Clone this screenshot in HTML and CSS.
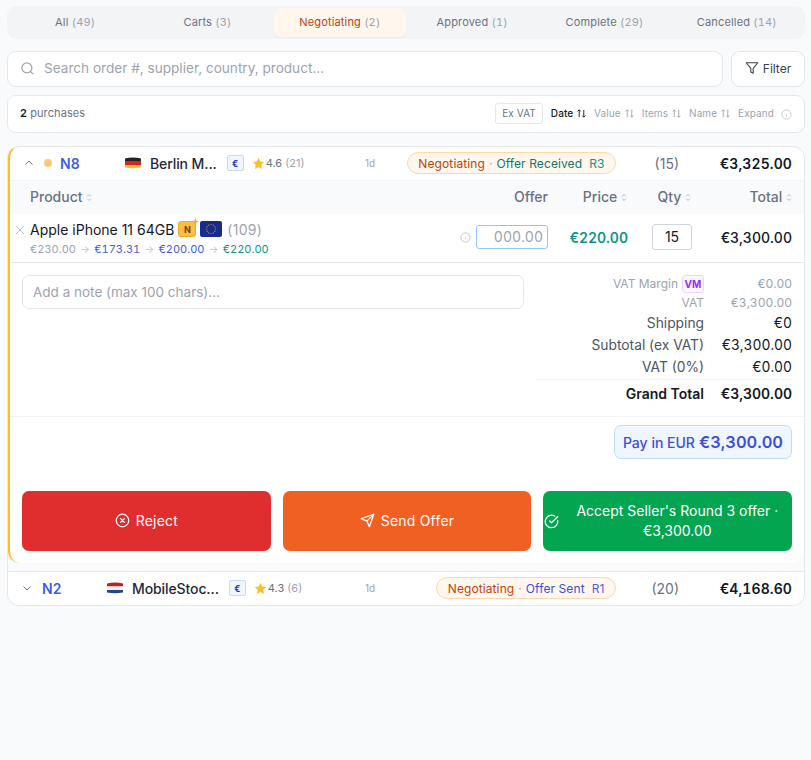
FILE: index.html
```html
<!DOCTYPE html>
<html lang="en">
<head>
    <meta charset="UTF-8">
    <title>Purchases</title>
    <link rel="stylesheet" href="styles.css">
</head>
<body>
    <nav class="tabs">
        <a class="tab">All <span>(49)</span></a>
        <a class="tab">Carts <span>(3)</span></a>
        <a class="tab tab-active">Negotiating <span>(2)</span></a>
        <a class="tab">Approved <span>(1)</span></a>
        <a class="tab">Complete <span>(29)</span></a>
        <a class="tab">Cancelled <span>(14)</span></a>
    </nav>

    <div class="search-row">
        <div class="search">
            <svg class="search-icon" viewBox="0 0 24 24"><circle cx="11" cy="11" r="8"/><path d="M21 21l-4.3-4.3"/></svg>
            <span>Search order #, supplier, country, product...</span>
        </div>
        <button class="filter-btn">
            <svg viewBox="0 0 24 24"><path d="M22 3H2l8 9.5V19l4 2v-8.500z"/></svg>
            Filter
        </button>
    </div>

    <div class="summary">
        <div class="count"><b>2</b> purchases</div>
        <div class="sorts">
            <span class="vat-toggle">Ex VAT</span>
            <span class="sort sort-active">Date <svg viewBox="0 0 12 12"><path d="M3.500 10V2M1.800 3.700L3.500 2l1.700 1.700M8.500 2v8M6.800 8.300L8.500 10l1.700-1.700"/></svg></span>
            <span class="sort">Value <svg viewBox="0 0 12 12"><path d="M3.500 10V2M1.800 3.700L3.500 2l1.700 1.700M8.500 2v8M6.800 8.300L8.500 10l1.700-1.700"/></svg></span>
            <span class="sort">Items <svg viewBox="0 0 12 12"><path d="M3.500 10V2M1.800 3.700L3.500 2l1.700 1.700M8.500 2v8M6.800 8.300L8.500 10l1.700-1.700"/></svg></span>
            <span class="sort">Name <svg viewBox="0 0 12 12"><path d="M3.500 10V2M1.800 3.700L3.500 2l1.700 1.700M8.500 2v8M6.800 8.300L8.500 10l1.700-1.700"/></svg></span>
            <span class="sort">Expand</span>
            <svg class="info-icon" viewBox="0 0 24 24"><circle cx="12" cy="12" r="10"/><path d="M12 16v-4.500M12 8h.01"/></svg>
        </div>
    </div>

    <div class="orders">
        <section class="order-open">
            <div class="order-head">
                <div class="order-left">
                    <svg class="chevron" viewBox="0 0 24 24"><path d="M5 15l7-7 7 7"/></svg>
                    <span class="dot"></span>
                    <span class="order-id">N8</span>
                    <svg class="flag" viewBox="0 0 16 12"><path fill="#222" d="M0 1.500q8-2 16 0v3.300H0z"/><path fill="#d8232a" d="M0 4.500h16v3.500H0z"/><path fill="#f5c518" d="M0 8h16v2.500q-8 1.500-16 0z"/></svg>
                    <span class="supplier">Berlin M...</span>
                    <span class="euro-badge">€</span>
                    <svg class="star" viewBox="0 0 24 24"><path d="M12 1.500l3.200 6.800 7.300 1-5.300 5.200 1.300 7.500-6.500-3.600-6.500 3.600 1.300-7.500L1.500 9.300l7.300-1z"/></svg>
                    <span class="rating">4.6 <span>(21)</span></span>
                </div>
                <span class="age">1d</span>
                <div class="status-wrap">
                    <span class="status"><span class="st-neg">Negotiating</span> <i>·</i> <span class="st-green">Offer Received</span> <span class="st-round-green">R3</span></span>
                </div>
                <span class="items-count">(15)</span>
                <span class="order-total">€3,325.00</span>
            </div>

            <div class="table-head">
                <span class="th-product">Product <svg class="updown" viewBox="0 0 8 12"><path d="M1.500 4.500L4 2l2.500 2.500M1.500 7.500L4 10l2.500-2.500"/></svg></span>
                <span class="th-offer">Offer</span>
                <span class="th-price">Price <svg class="updown" viewBox="0 0 8 12"><path d="M1.500 4.500L4 2l2.500 2.500M1.500 7.500L4 10l2.500-2.500"/></svg></span>
                <span class="th-qty">Qty <svg class="updown" viewBox="0 0 8 12"><path d="M1.500 4.500L4 2l2.500 2.500M1.500 7.500L4 10l2.500-2.500"/></svg></span>
                <span class="th-total">Total <svg class="updown" viewBox="0 0 8 12"><path d="M1.500 4.500L4 2l2.500 2.500M1.500 7.500L4 10l2.500-2.500"/></svg></span>
            </div>

            <div class="item-row">
                <svg class="remove" viewBox="0 0 10 10"><path d="M1 1l8 8M9 1l-8 8"/></svg>
                <div class="item-main">
                    <div class="item-name">
                        <span>Apple iPhone 11 64GB</span>
                        <span class="n-badge">N<svg class="spark" viewBox="0 0 8 8"><path d="M4 0l1 3 3 1-3 1-1 3-1-3-3-1 3-1z"/></svg></span>
                        <svg class="eu-flag" viewBox="0 0 22 16">
                            <rect width="22" height="16" rx="2" fill="#1a2a8c"/>
                            <g fill="#c9a92e"><circle cx="11" cy="3.500" r=".6"/><circle cx="13.300" cy="4.100" r=".6"/><circle cx="14.900" cy="5.800" r=".6"/><circle cx="15.500" cy="8" r=".6"/><circle cx="14.900" cy="10.200" r=".6"/><circle cx="13.300" cy="11.900" r=".6"/><circle cx="11" cy="12.500" r=".6"/><circle cx="8.700" cy="11.900" r=".6"/><circle cx="7.100" cy="10.200" r=".6"/><circle cx="6.500" cy="8" r=".6"/><circle cx="7.100" cy="5.800" r=".6"/><circle cx="8.700" cy="4.100" r=".6"/></g>
                        </svg>
                        <span class="stock">(109)</span>
                    </div>
                    <div class="price-trail">
                        <span class="pt-grey">€230.00</span><span class="arrow">→</span><span class="pt-blue">€173.31</span><span class="arrow">→</span><span class="pt-blue">€200.00</span><span class="arrow">→</span><span class="pt-green">€220.00</span>
                    </div>
                </div>
                <svg class="info-icon offer-info" viewBox="0 0 24 24"><circle cx="12" cy="12" r="10"/><path d="M12 16v-4.500M12 8h.01"/></svg>
                <div class="offer-input">000.00</div>
                <div class="item-price">€220.00</div>
                <div class="qty-cell"><span class="qty-input">15</span></div>
                <div class="item-total">€3,300.00</div>
            </div>

            <div class="note-row">
                <div class="note-input">Add a note (max 100 chars)...</div>
                <div class="totals">
                    <div class="t-row t-small"><span class="t-label">VAT Margin <b class="vm">VM</b></span><span class="t-val">€0.00</span></div>
                    <div class="t-row t-small"><span class="t-label">VAT</span><span class="t-val">€3,300.00</span></div>
                    <div class="t-row t-normal"><span class="t-label">Shipping</span><span class="t-val">€0</span></div>
                    <div class="t-row t-normal"><span class="t-label">Subtotal (ex VAT)</span><span class="t-val">€3,300.00</span></div>
                    <div class="t-row t-normal"><span class="t-label">VAT (0%)</span><span class="t-val">€0.00</span></div>
                    <div class="t-row t-grand"><span class="t-label">Grand Total</span><span class="t-val">€3,300.00</span></div>
                </div>
            </div>

            <div class="pay-row">
                <div class="pay-chip">Pay in EUR <b>€3,300.00</b></div>
            </div>

            <div class="actions">
                <button class="action action-red">
                    <svg viewBox="0 0 24 24"><circle cx="12" cy="12" r="10"/><path d="M15 9l-6 6M9 9l6 6"/></svg>
                    Reject
                </button>
                <button class="action action-orange">
                    <svg viewBox="0 0 24 24"><path d="M22 2L11 13M22 2l-7 20-4-9-9-4z"/></svg>
                    Send Offer
                </button>
                <button class="action action-green">
                    <svg viewBox="0 0 24 24"><path d="M21.800 10A10 10 0 1 1 17 3.300"/><path d="M9 11l3 3L22 4"/></svg>
                    <span>Accept Seller's Round 3 offer · €3,300.00</span>
                </button>
            </div>
        </section>

        <section class="order-closed">
            <div class="order-head">
                <div class="order-left">
                    <svg class="chevron chevron-small" viewBox="0 0 24 24"><path d="M5 9l7 7 7-7"/></svg>
                    <span class="order-id">N2</span>
                    <svg class="flag" viewBox="0 0 16 12"><path fill="#b5242c" d="M0 1.500q8-2 16 0v3H0z"/><path fill="#f2f2f2" d="M0 4.500h16v3.500H0z"/><path fill="#27408f" d="M0 8h16v2.500q-8 1.500-16 0z"/></svg>
                    <span class="supplier">MobileStoc...</span>
                    <span class="euro-badge">€</span>
                    <svg class="star" viewBox="0 0 24 24"><path d="M12 1.500l3.200 6.800 7.300 1-5.300 5.200 1.300 7.500-6.500-3.600-6.500 3.600 1.300-7.500L1.500 9.300l7.300-1z"/></svg>
                    <span class="rating">4.3 <span>(6)</span></span>
                </div>
                <span class="age">1d</span>
                <div class="status-wrap">
                    <span class="status"><span class="st-neg">Negotiating</span> <i>·</i> <span class="st-blue">Offer Sent</span> <span class="st-round-blue">R1</span></span>
                </div>
                <span class="items-count">(20)</span>
                <span class="order-total">€4,168.60</span>
            </div>
        </section>
    </div>
</body>
</html>
```

FILE: styles.css
```css
* {
    box-sizing: border-box;
}

body {
    margin: 0;
    padding: 6px 6px 0 7px;
    font-family: Inter, "Liberation Sans", sans-serif;
    background-color: #f9fafb;
    color: #111827;
}

/* prices and counts line up in columns */
.tab span,
.price-trail,
.order-total,
.item-price,
.item-total,
.offer-input,
.t-val,
.pay-chip b {
    font-variant-numeric: tabular-nums;
}

/* tabs */
.tabs {
    display: grid;
    grid-template-columns: repeat(6, 1fr);
    height: 33px;
    padding: 2px;
    background: #f3f4f6;
    border-radius: 9px;
}

.tab {
    display: flex;
    align-items: center;
    justify-content: center;
    padding-bottom: 2px;
    font-size: 11px;
    letter-spacing: .15px;
    color: #6b7280;
    border-radius: 7px;
    white-space: pre;
}

.tab span {
    color: #9ca3af;
}

.tab-active {
    background: #fff7ed;
    color: #c2410c;
    box-shadow: 0 1px 2px rgba(0, 0, 0, .05);
}

/* search */
.search-row {
    display: flex;
    gap: 8px;
    margin-top: 12px;
}

.search {
    flex: 1;
    height: 36px;
    display: flex;
    align-items: center;
    gap: 9px;
    padding: 0 0 2px 12px;
    background: #fff;
    border: 1px solid #e5e7eb;
    border-radius: 9px;
    font-size: 13.600px;
    color: #9ca3af;
}

.search-icon {
    width: 15px;
    height: 15px;
    fill: none;
    stroke: #9ca3af;
    stroke-width: 2;
}

.filter-btn {
    width: 74px;
    height: 36px;
    display: flex;
    align-items: center;
    justify-content: center;
    gap: 4px;
    padding: 0 0 2px;
    background: #fff;
    border: 1px solid #e5e7eb;
    border-radius: 9px;
    font: 12px Inter, sans-serif;
    color: #374151;
}

.filter-btn svg {
    width: 14px;
    height: 14px;
    fill: none;
    stroke: #374151;
    stroke-width: 1.800;
    stroke-linejoin: round;
}

/* summary bar */
.summary {
    display: flex;
    align-items: center;
    justify-content: space-between;
    height: 38px;
    margin-top: 8px;
    padding: 0 12px 2px;
    background: #fff;
    border: 1px solid #e5e7eb;
    border-radius: 9px;
    font-size: 10px;
    color: #6b7280;
}

.count {
    font-size: 11px;
    letter-spacing: .1px;
}

.count b {
    color: #111827;
    font-weight: 600;
}

.sorts {
    display: flex;
    align-items: center;
    gap: 7px;
    font-size: 10px;
    letter-spacing: .1px;
    color: #9ca3af;
}

.vat-toggle {
    height: 21px;
    line-height: 19px;
    padding: 0 6px;
    border: 1px solid #e5e7eb;
    border-radius: 3px;
    color: #6b7280;
    margin-right: 1px;
}

.sort {
    display: flex;
    align-items: center;
    white-space: pre;
}

.sort svg {
    width: 11px;
    height: 11px;
    fill: none;
    stroke: currentColor;
    stroke-width: 1;
}

.sort-active {
    color: #111827;
    font-weight: 500;
}

.info-icon {
    width: 11px;
    height: 11px;
    fill: none;
    stroke: #c2c6cd;
    stroke-width: 2;
}

.sorts .info-icon {
    margin-top: 2px;
}

/* orders */
.orders {
    margin-top: 13px;
    border: 1px solid #e5e7eb;
    border-radius: 12px;
    background: #f9fafb;
}

.order-open {
    background: #fff;
    border-left: 2px solid #fbbf24;
    border-radius: 12px;
    height: 417px;
    margin-top: -1px;
    border-top: 1px solid #e5e7eb;
}

.order-closed {
    background: #fff;
    margin-top: 8px;
    border-top: 1px solid #e5e7eb;
    border-radius: 0 0 12px 12px;
    padding-left: 2px;
}

.order-head {
    display: flex;
    align-items: center;
    height: 33px;
    padding: 0 12px 1px 13px;
    font-size: 14px;
}

.order-left {
    width: 342px;
    display: flex;
    align-items: center;
    flex-shrink: 0;
}

.chevron {
    width: 12px;
    height: 12px;
    fill: none;
    stroke: #6b7280;
    stroke-width: 2;
    margin-right: 9px;
}

.chevron-small {
    margin-left: -2px;
    margin-right: 9px;
}

.dot {
    width: 8px;
    height: 8px;
    border-radius: 50%;
    background: #fbc77d;
    margin-right: 8px;
}

.order-id {
    width: 65px;
    font-weight: 600;
    color: #3d5ee1;
}

.flag {
    width: 16px;
    height: 12px;
    margin-right: 9px;
}

.supplier {
    font-weight: 500;
    letter-spacing: -.1px;
    color: #1f2937;
    margin-right: 10px;
    white-space: nowrap;
}

.euro-badge {
    width: 17px;
    height: 16px;
    display: flex;
    align-items: center;
    justify-content: center;
    background: #eff6ff;
    border: 1px solid #bfdbfe;
    border-radius: 2px;
    font-size: 9px;
    font-weight: 700;
    color: #1e40af;
    margin-right: 8px;
}

.star {
    width: 13px;
    height: 13px;
    fill: #fbc02d;
    margin-right: 1px;
}

.rating {
    font-size: 11px;
    color: #6b7280;
}

.rating span {
    color: #9ca3af;
}

.age {
    font-size: 10px;
    color: #9ca3af;
}

.status-wrap {
    flex: 1;
    display: flex;
    justify-content: flex-end;
}

.status {
    height: 22px;
    display: flex;
    align-items: center;
    padding: 0 10.500px;
    gap: 4px;
    background: #fff7ed;
    border: 1px solid #fed7aa;
    border-radius: 11px;
    font-size: 12px;
    letter-spacing: .1px;
    white-space: pre;
}

.status i {
    font-style: normal;
    color: #9ca3af;
}

.st-neg {
    color: #c2410c;
}

.st-green {
    color: #0f766e;
}

.st-round-green {
    color: #0d9488;
    margin-left: 3px;
}

.st-blue {
    color: #3b4fd8;
}

.st-round-blue {
    color: #4f63d8;
    margin-left: 3px;
}

.items-count {
    width: 63px;
    text-align: right;
    font-size: 14px;
    color: #6b7280;
}

.order-total {
    width: 113px;
    text-align: right;
    font-size: 14px;
    font-weight: 600;
    letter-spacing: .1px;
    color: #111827;
}

/* item table */
.table-head {
    display: flex;
    align-items: center;
    height: 34px;
    padding: 0 12px 2px 20px;
    background: #f9fafb;
    border-top: 1px solid #f3f4f6;
    font-size: 14px;
    font-weight: 500;
    color: #6b7280;
}

.updown {
    width: 6px;
    height: 9px;
    fill: none;
    stroke: #9ca3af;
    stroke-width: 1;
}

.th-product {
    flex: 1;
}

.th-offer {
    width: 60px;
    text-align: right;
}

.th-price {
    width: 79px;
    text-align: right;
}

.th-qty {
    width: 64px;
    text-align: right;
}

.th-total {
    width: 101px;
    text-align: right;
}

.item-row {
    display: flex;
    align-items: center;
    height: 49px;
    padding: 0 12px 2px 5px;
    border-bottom: 1px solid #e5e7eb;
}

.remove {
    width: 10px;
    height: 10px;
    fill: none;
    stroke: #c2c6cd;
    stroke-width: 1;
    margin-right: 5px;
    margin-top: -15px;
}

.item-main {
    flex: 1;
    margin-top: 2px;
}

.item-name {
    display: flex;
    align-items: center;
    font-size: 14px;
    color: #111827;
    height: 18px;
    white-space: nowrap;
}

.n-badge {
    position: relative;
    width: 18px;
    height: 16px;
    margin-left: 4px;
    display: flex;
    align-items: center;
    justify-content: center;
    background: #fbbf48;
    border: 1px solid #f5a623;
    border-radius: 3px;
    font-size: 9px;
    font-weight: 700;
    color: #78400f;
}

.spark {
    position: absolute;
    top: -4px;
    right: -4px;
    width: 7px;
    height: 7px;
    fill: #f5a623;
}

.eu-flag {
    width: 22px;
    height: 16px;
    margin-left: 4px;
}

.stock {
    margin-left: 5px;
    letter-spacing: .3px;
    color: #9ca3af;
}

.price-trail {
    display: flex;
    align-items: center;
    margin-top: 4px;
    font-size: 11px;
    line-height: 14px;
}

.arrow {
    width: 18.300px;
    text-align: center;
    font-size: 10px;
    color: #c2c6cd;
}

.pt-grey {
    color: #9ca3af;
}

.pt-blue {
    color: #3d5ee1;
}

.pt-green {
    color: #0d9488;
}

.offer-info {
    margin-right: 5px;
}

.offer-input {
    width: 72px;
    height: 24px;
    line-height: 22px;
    padding-right: 4px;
    text-align: right;
    border: 1px solid #93c5fd;
    border-radius: 3px;
    font-size: 14px;
    color: #9ca3af;
}

.item-price {
    width: 80px;
    text-align: right;
    font-size: 14px;
    font-weight: 600;
    color: #0d9488;
}

.qty-cell {
    width: 64px;
    display: flex;
    justify-content: flex-end;
}

.qty-input {
    width: 40px;
    height: 26px;
    line-height: 24px;
    text-align: center;
    border: 1px solid #d1d5db;
    border-radius: 3px;
    font-size: 14px;
}

.item-total {
    width: 100px;
    text-align: right;
    font-size: 14px;
    font-weight: 500;
}

/* note and totals */
.note-row {
    display: flex;
    justify-content: space-between;
    height: 154px;
    padding: 12px 12px 0;
    border-bottom: 1px solid #f3f4f6;
}

.note-input {
    width: 502px;
    height: 34px;
    line-height: 32px;
    padding-left: 10px;
    border: 1px solid #e5e7eb;
    border-radius: 7px;
    font-size: 13.500px;
    color: #9ca3af;
}

.totals {
    width: 256px;
    margin-top: -1px;
}

.t-row {
    display: flex;
    justify-content: flex-end;
    align-items: center;
}

.t-label {
    display: flex;
    align-items: center;
    gap: 4px;
}

.t-val {
    width: 88px;
    text-align: right;
}

.t-small {
    height: 19px;
    font-size: 12px;
    color: #9ca3af;
}

.vm {
    width: 22px;
    height: 18px;
    display: flex;
    align-items: center;
    justify-content: center;
    background: #faf5ff;
    border: 1px solid #e9d5ff;
    border-radius: 3px;
    font-size: 10px;
    font-weight: 700;
    color: #9333ea;
}

.t-normal {
    height: 22px;
    font-size: 13.800px;
    color: #4b5563;
}

.t-normal .t-val {
    color: #111827;
}

.t-grand {
    height: 29px;
    margin-top: 1px;
    padding-bottom: 2px;
    border-top: 1px solid #f3f4f6;
    font-size: 14px;
    font-weight: 600;
    color: #111827;
}

.pay-row {
    display: flex;
    justify-content: flex-end;
    padding: 8px 12px 0;
}

.pay-chip {
    height: 34px;
    width: 178px;
    display: flex;
    align-items: center;
    justify-content: center;
    gap: 4px;
    background: #eff6ff;
    border: 1px solid #bfdbfe;
    border-radius: 7px;
    font-size: 14px;
    font-weight: 500;
    color: #3b4fd8;
}

.pay-chip b {
    font-size: 16.500px;
    font-weight: 600;
}

.actions {
    display: grid;
    grid-template-columns: repeat(3, 1fr);
    gap: 12px;
    padding: 0 12px;
    margin-top: 32px;
}

.action {
    height: 60px;
    display: flex;
    align-items: center;
    justify-content: center;
    gap: 6px;
    padding: 0 0 2px;
    border: 0;
    border-radius: 7px;
    font: 400 14px Inter, sans-serif;
    letter-spacing: .2px;
    color: #fff;
}

.action svg {
    width: 15px;
    height: 15px;
    flex-shrink: 0;
    fill: none;
    stroke: #fff;
    stroke-width: 2;
    stroke-linecap: round;
    stroke-linejoin: round;
}

.action-red {
    background: #e02d2e;
}

.action-orange {
    background: #f06023;
}

.action-green {
    justify-content: flex-start;
    background: #03a550;
    padding: 0 0 0 1px;
    gap: 8px;
    letter-spacing: 0;
    line-height: 20px;
}

.action-green span {
    width: 220px;
}
```
